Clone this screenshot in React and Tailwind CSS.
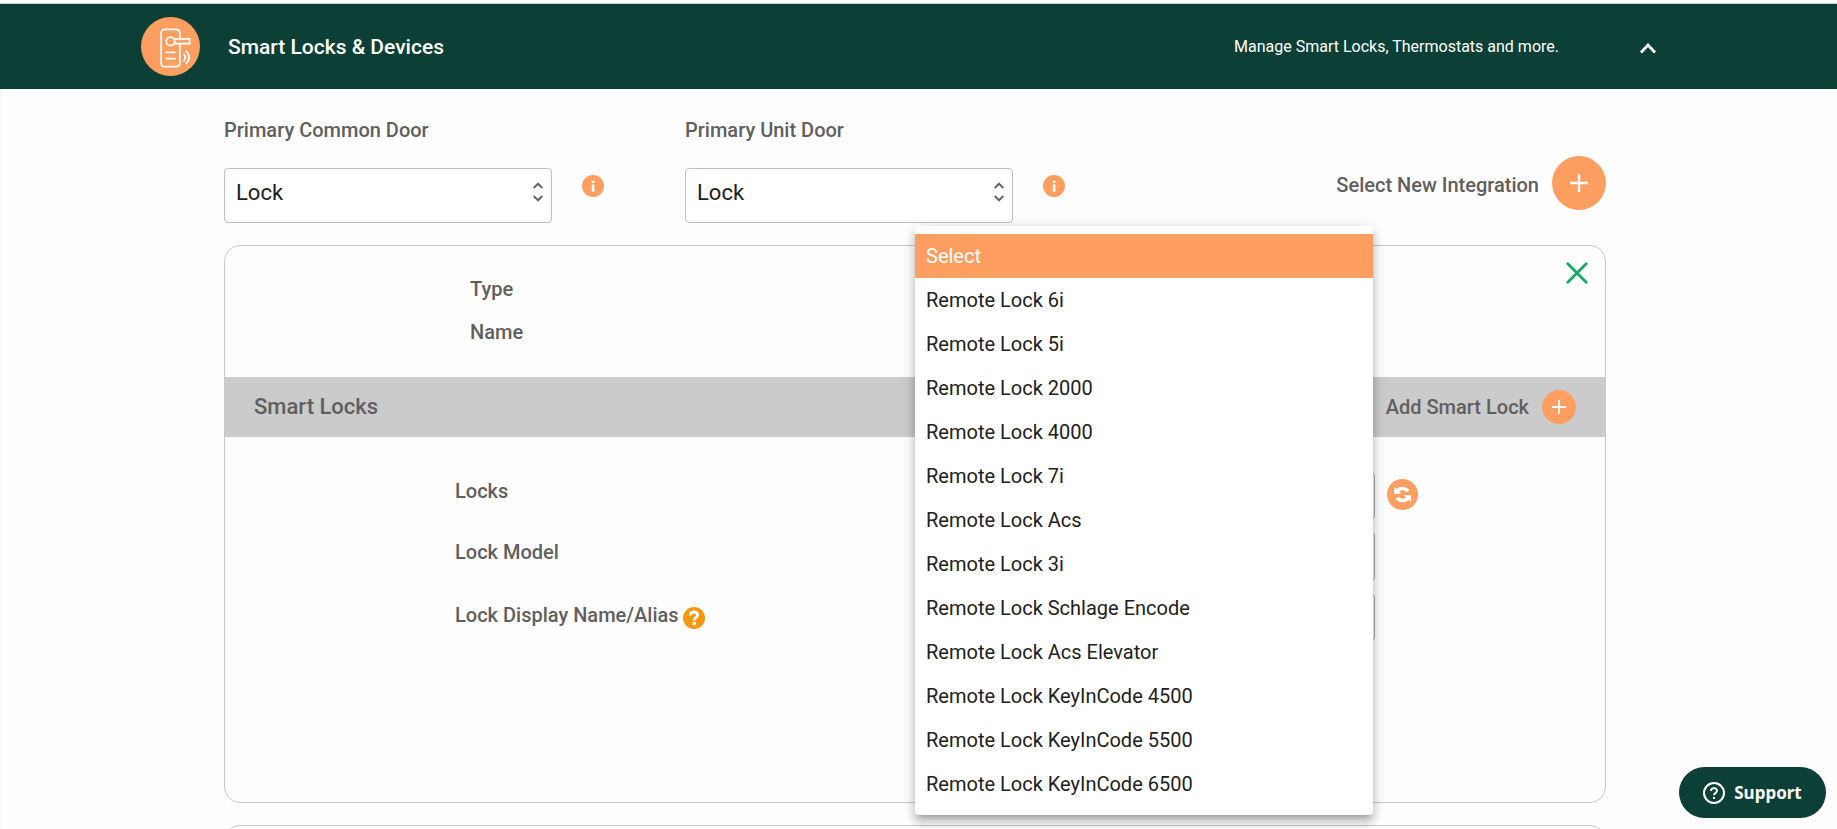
import { useState } from "react";

const MODELS = [
  "Select",
  "Remote Lock 6i",
  "Remote Lock 5i",
  "Remote Lock 2000",
  "Remote Lock 4000",
  "Remote Lock 7i",
  "Remote Lock Acs",
  "Remote Lock 3i",
  "Remote Lock Schlage Encode",
  "Remote Lock Acs Elevator",
  "Remote Lock KeyInCode 4500",
  "Remote Lock KeyInCode 5500",
  "Remote Lock KeyInCode 6500",
];

function DoorLockIcon() {
  return (
    <svg viewBox="0 0 60 60" className="size-[59px]" fill="none" stroke="#fff" strokeWidth="1.8" aria-hidden="true">
      <circle cx="30" cy="30" r="30" fill="#ff9e61" stroke="none" />
      <path d="M39.500 22V16a3.500 3.500 0 0 0-3.500-3.500H24a3.500 3.500 0 0 0-3.500 3.500v31a3.500 3.500 0 0 0 3.500 3.500h12a3.500 3.500 0 0 0 3.500-3.500V27.500" />
      <path d="M34 22.300H49.500v4.800H34" />
      <circle cx="30" cy="24.700" r="4.300" />
      <path d="M25.500 36h9M25.500 42.300h9" strokeLinecap="round" />
      <path d="M43.500 38q3 3 0 6.500M46 35q6 6 0 12" strokeLinecap="round" />
    </svg>
  );
}

function Plus({ className }) {
  return (
    <svg viewBox="0 0 18 18" className={className} stroke="#fff" strokeWidth="2.4" aria-hidden="true">
      <path d="M9 0v18M0 9h18" />
    </svg>
  );
}

function InfoIcon() {
  return (
    <svg viewBox="0 0 22 22" className="size-[22px]" aria-hidden="true">
      <circle cx="11" cy="11" r="11" fill="#ff9e61" />
      <path d="M9.800 5.700h2.600v2.400H9.800zM9.800 9.600h2.600v7.200H9.800z" fill="#fff" />
    </svg>
  );
}

function DoorField({ id, label }) {
  return (
    <div className="flex w-[461px] flex-col gap-6">
      <label htmlFor={id} className="text-[20px] leading-7 font-medium text-[#5f5f5f]">
        {label}
      </label>
      <div className="flex items-start gap-[30px]">
        <div className="relative">
          <select
            id={id}
            defaultValue="Lock"
            className="h-[55px] w-[328px] appearance-none rounded border border-[#c0c0c0] bg-white px-[11px] pb-[7px] text-[22px] text-[#212121]"
          >
            <option>Lock</option>
          </select>
          <svg
            viewBox="0 0 10 20"
            className="pointer-events-none absolute top-[14px] right-[9px] h-5 w-[10px]"
            fill="none"
            stroke="#666"
            strokeWidth="2"
            aria-hidden="true"
          >
            <path d="M.7 6L5 1.700 9.300 6M.7 14L5 18.300 9.300 14" />
          </svg>
        </div>
        <button type="button" aria-label={`About ${label}`} className="pt-[7px]">
          <InfoIcon />
        </button>
      </div>
    </div>
  );
}

function ModelMenu({ value, onPick }) {
  return (
    <ul
      role="listbox"
      aria-label="Lock Model"
      className="absolute -top-[306px] left-0 z-10 w-[458px] rounded bg-white pt-2 pb-[9px] font-normal shadow-[0_5px_5px_-3px_rgba(0,0,0,0.2),0_8px_10px_1px_rgba(0,0,0,0.14),0_3px_14px_2px_rgba(0,0,0,0.12)]"
    >
      {MODELS.map((model) => (
        <li
          key={model}
          role="option"
          aria-selected={model === value}
          onClick={() => onPick(model)}
          className={
            model === value
              ? "flex h-11 cursor-pointer items-center bg-[#ff9e61] px-[11px] text-[20px] text-white"
              : "flex h-11 cursor-pointer items-center px-[11px] text-[20px] text-[#212121]"
          }
        >
          {model}
        </li>
      ))}
    </ul>
  );
}

export default function App() {
  const [model, setModel] = useState("Select");
  const field = "w-[460px] appearance-none rounded border border-[#aaa] bg-white px-3";

  return (
    <div className="h-screen overflow-hidden bg-[#fefefe] font-[Roboto,sans-serif] text-[#5f5f5f]">
      <div className="h-1 border-b border-[#c9d0cc] bg-[#fdfdfa]" />
      <header className="flex h-[85px] items-center bg-[#0c3f36] pr-[180px] pl-[141px] text-white">
        <DoorLockIcon />
        <h1 className="ml-7 flex-1 pt-[2px] text-[21px] font-medium">Smart Locks &amp; Devices</h1>
        <p className="text-[16px]">Manage Smart Locks, Thermostats and more.</p>
        <button type="button" aria-label="Collapse section" className="ml-20 pt-[2px]">
          <svg viewBox="0 0 18 12" className="h-3 w-[18px]" fill="none" stroke="#fff" strokeWidth="2.800" aria-hidden="true">
            <path d="M2 10.500L9 3l7 7.500" />
          </svg>
        </button>
      </header>

      <main className="border-l border-[#f7f7f7] pr-[231px] pl-[223px]">
        <div className="flex h-[156px] items-start pt-[27px]">
          <DoorField id="common-door" label="Primary Common Door" />
          <DoorField id="unit-door" label="Primary Unit Door" />
          <div className="ml-auto flex items-center gap-[13px] pt-10">
            <span className="pt-1 text-[20px] font-medium">Select New Integration</span>
            <button
              type="button"
              aria-label="Select New Integration"
              className="flex size-[54px] items-center justify-center rounded-full bg-[#ff9e61]"
            >
              <Plus className="size-[18px]" />
            </button>
          </div>
        </div>

        <section className="h-[558px] rounded-2xl border border-[#c8c8c8]">
          <div className="flex h-[131px] items-start justify-between pr-[17px] pl-[245px]">
            <div className="pt-[22px] text-[20px] leading-[43px] font-medium">
              <p>Type</p>
              <p>Name</p>
            </div>
            <button type="button" aria-label="Remove integration" className="pt-4">
              <svg viewBox="0 0 22 22" className="size-[22px]" stroke="#16a964" strokeWidth="2.800" strokeLinecap="round" aria-hidden="true">
                <path d="M1.800 1.800l18.400 18.400M20.200 1.800L1.800 20.200" />
              </svg>
            </button>
          </div>

          <div className="flex h-[60px] items-center bg-[#cbcbcb] pr-[29px] pl-[29px]">
            <h2 className="flex-1 pb-[2px] text-[22px] font-medium">Smart Locks</h2>
            <span className="text-[20px] font-medium">Add Smart Lock</span>
            <button
              type="button"
              aria-label="Add Smart Lock"
              className="ml-[13px] flex size-[34px] items-center justify-center rounded-full bg-[#ff9e61]"
            >
              <Plus className="size-[14px]" />
            </button>
          </div>

          <form className="flex flex-col gap-[13px] pt-[35px] pl-[230px] text-[20px] font-medium">
            <div className="flex h-[47px] items-center">
              <label htmlFor="lock" className="w-[460px] pb-[10px]">
                Locks
              </label>
              <select id="lock" className={`h-[47px] ${field}`} />
              <button type="button" aria-label="Refresh locks" className="ml-3 pb-[2px]">
                <svg viewBox="0 0 32 32" className="size-[31px]" aria-hidden="true">
                  <circle cx="16" cy="16" r="16" fill="#ff9e61" />
                  <g fill="#fff">
                    <path d="M7.300 8.300l2.200 2.100A9 9 0 0 1 23.300 12l-3.700 1.300A5.200 5.200 0 0 0 12.600 13l2 2.200H7.300z" />
                    <path d="M24.700 23.700l-2.200-2.100A9 9 0 0 1 8.700 20l3.700-1.300a5.200 5.200 0 0 0 7 .3l-2-2.200h7.300z" />
                  </g>
                </svg>
              </button>
            </div>
            <div className="flex h-[49px] items-center">
              <label htmlFor="model" className="w-[460px] pb-[10px]">
                Lock Model
              </label>
              <div className="relative">
                <select id="model" value={model} onChange={(e) => setModel(e.target.value)} className={`block h-[49px] ${field}`}>
                  {MODELS.map((name) => (
                    <option key={name}>{name}</option>
                  ))}
                </select>
                <ModelMenu value={model} onPick={setModel} />
              </div>
            </div>
            <div className="flex h-[47px] items-center">
              <div className="flex w-[460px] items-center gap-1">
                <label htmlFor="alias" className="pb-[6px]">
                  Lock Display Name/Alias
                </label>
                <button type="button" aria-label="About the display name">
                  <svg viewBox="0 0 22 22" className="size-[22px]" aria-hidden="true">
                    <circle cx="11" cy="11" r="11" fill="#f7960f" />
                    <path d="M7.300 8.600C7.300 4 14.600 4 14.600 8c0 2.500-3.400 2.300-3.400 5.400" fill="none" stroke="#fff" strokeWidth="3" />
                    <path d="M9.600 15h3.200v3.200H9.600z" fill="#fff" />
                  </svg>
                </button>
              </div>
              <input id="alias" type="text" className={`h-[47px] ${field}`} />
            </div>
          </form>
        </section>

        <section className="mt-[22px] h-40 rounded-2xl border border-[#c8c8c8]" />
      </main>

      <button
        type="button"
        className="fixed right-[11px] bottom-[11px] flex h-[51px] w-[147px] items-center justify-center gap-[9px] rounded-full bg-[#0c3f36] font-['Noto_Sans',sans-serif] text-[17px] font-bold text-white"
      >
        <svg viewBox="0 0 22 22" className="size-[22px]" fill="none" stroke="#fff" strokeWidth="2" aria-hidden="true">
          <circle cx="11" cy="11" r="10" />
          <path d="M8 9C8 5.200 14 5.200 14 8.800c0 2.200-3 2.200-3 4.500" />
          <path d="M10 15h2v2h-2z" fill="#fff" stroke="none" />
        </svg>
        Support
      </button>
    </div>
  );
}
